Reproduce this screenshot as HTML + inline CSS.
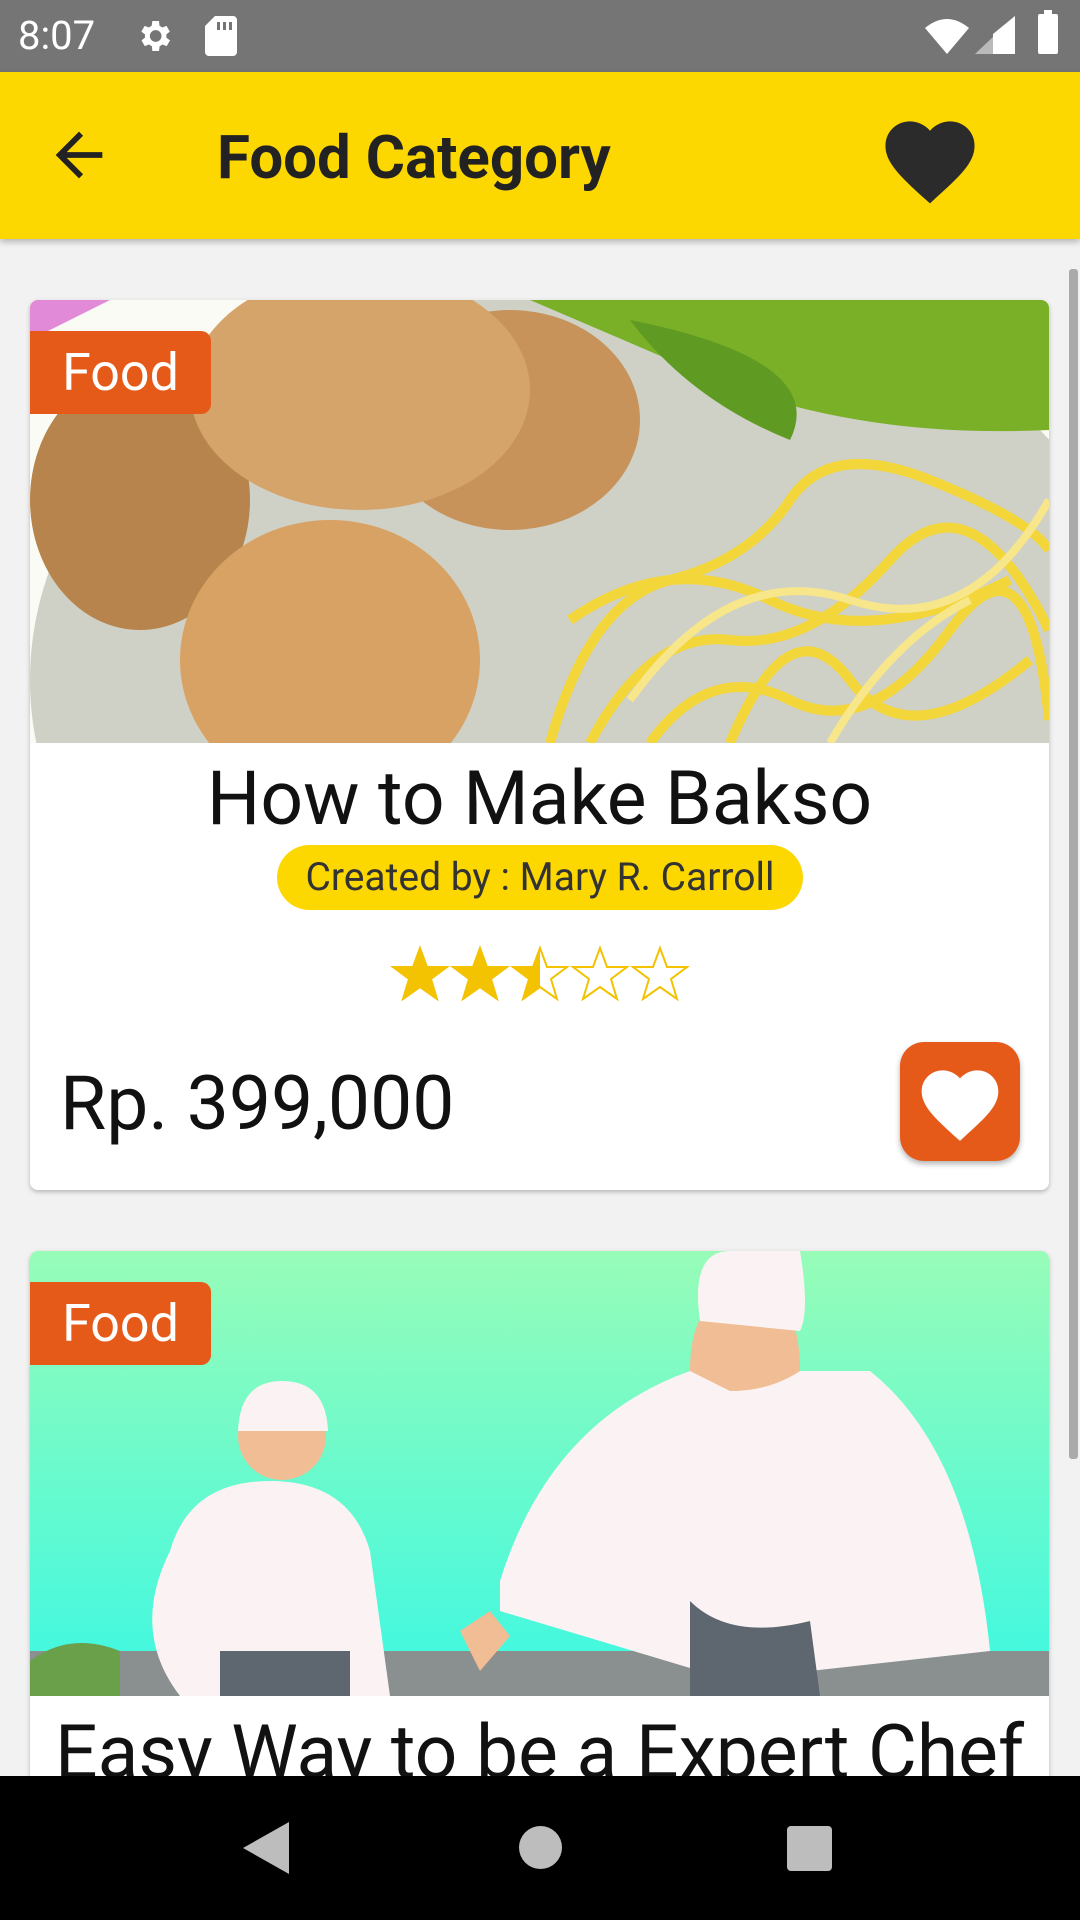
<!DOCTYPE html>
<html><head><meta charset="utf-8"><style>
*{margin:0;padding:0;box-sizing:border-box}
body{width:1080px;height:1920px;overflow:hidden;background:#f2f2f2;font-family:"Roboto","Liberation Sans",sans-serif;position:relative}
.status{position:absolute;top:0;left:0;width:1080px;height:72px;background:#757575;color:#fff}
.appbar{position:absolute;top:72px;left:0;width:1080px;height:167px;background:#fdd700;box-shadow:0 3px 6px rgba(0,0,0,.25)}
.card{position:absolute;left:30px;width:1019px;background:#fff;border-radius:8px;overflow:hidden;box-shadow:0 2px 5px rgba(0,0,0,.25)}
.badge{position:absolute;left:0;top:31px;width:181px;height:83px;background:#e65a19;border-radius:0 10px 10px 0;color:#fff;font-size:52px;line-height:83px;text-align:center}
.nav{position:absolute;left:0;top:1776px;width:1080px;height:144px;background:#000}
</style></head><body>
<div class="status">
<div style="position:absolute;left:18px;top:12px;font-size:40px">8:07</div>
<svg style="position:absolute;left:134px;top:16px" width="40" height="40" viewBox="0 0 24 24"><path fill="#fff" d="M19.4 13a7.5 7.5 0 000-2l2.1-1.6-2-3.5-2.5 1a7 7 0 00-1.7-1L15 3h-4l-.4 2.9a7 7 0 00-1.7 1l-2.5-1-2 3.5L6.6 11a7.5 7.5 0 000 2l-2.1 1.6 2 3.5 2.5-1a7 7 0 001.7 1L11 21h4l.4-2.9a7 7 0 001.7-1l2.5 1 2-3.5zM13 15.5a3.5 3.5 0 110-7 3.5 3.5 0 010 7z"/></svg>
<svg style="position:absolute;left:205px;top:16px" width="32" height="40" viewBox="0 0 16 20"><path fill="#fff" d="M5 0h9a2 2 0 012 2v16a2 2 0 01-2 2H2a2 2 0 01-2-2V5zM6 3v4h1.5V3zM9 3v4h1.5V3zM12 3v4h1.5V3z"/></svg>
<svg style="position:absolute;left:925px;top:16px" width="90" height="40" viewBox="0 0 90 40"><path fill="#fff" d="M22 38L0 12Q22-6 44 12z"/><path fill="#fff" opacity=".5" d="M50 38L90 0v38z"/><path fill="#fff" d="M68 38V18L90 0v38z"/></svg>
<div style="position:absolute;left:1038px;top:14px;width:20px;height:40px;background:#fff;border-radius:2px"></div>
<div style="position:absolute;left:1044px;top:10px;width:8px;height:6px;background:#fff"></div>
</div>
<div class="appbar">
<svg style="position:absolute;left:44px;top:48px" width="70" height="70" viewBox="0 0 24 24"><path fill="#222" d="M20 11H7.8l5.6-5.6L12 4l-8 8 8 8 1.4-1.4L7.8 13H20z"/></svg>
<div style="position:absolute;left:217px;top:50px;font-size:60px;font-weight:bold;color:#222">Food Category</div>
<svg style="position:absolute;left:876px;top:36px" width="108" height="98" viewBox="0 0 24 22"><path fill="#2b2b2b" d="M12 21.4l-1.5-1.3C5.4 15.4 2 12.3 2 8.5 2 5.4 4.4 3 7.5 3c1.7 0 3.4.8 4.5 2.1C13.1 3.8 14.8 3 16.5 3 19.6 3 22 5.4 22 8.5c0 3.8-3.4 6.9-8.5 11.5z"/></svg>
</div>
<div style="position:absolute;left:1069px;top:269px;width:9px;height:1190px;background:#aaa;border-radius:3px"></div>

<div class="card" style="top:300px;height:890px">
<svg width="1019" height="443" viewBox="0 0 1019 443" style="display:block">
<rect width="1019" height="443" fill="#fbfbf6"/>
<ellipse cx="560" cy="380" rx="560" ry="420" fill="#cfd1c6"/>
<path d="M0 0h80L0 40z" fill="#e08ad8"/>
<path d="M500 0h519v130Q800 140 640 60z" fill="#79b027"/>
<path d="M600 20Q800 60 760 140Q660 100 600 20z" fill="#5f9a22"/>
<ellipse cx="110" cy="200" rx="110" ry="130" fill="#b6844c"/>
<ellipse cx="480" cy="120" rx="130" ry="110" fill="#c7935a"/>
<ellipse cx="330" cy="90" rx="170" ry="120" fill="#d4a46a"/>
<ellipse cx="300" cy="360" rx="150" ry="140" fill="#d8a264"/>
<g stroke="#f3d63a" stroke-width="10" fill="none">
<path d="M520 443Q560 300 640 280T760 200T900 180T1019 250"/>
<path d="M560 443Q620 330 700 340T860 260T1019 330"/>
<path d="M620 443Q680 360 760 400T920 330T1019 420"/>
<path d="M540 320Q640 250 740 300T980 280"/>
<path d="M700 443Q760 300 820 380T1000 360"/>
</g>
<g stroke="#f8e68a" stroke-width="8" fill="none">
<path d="M600 400Q700 260 820 300T1019 200"/>
<path d="M800 443Q860 340 940 300"/>
</g>
</svg>
<div class="badge">Food</div>
<div style="position:absolute;left:0;width:1019px;top:455px;text-align:center;font-size:75px;color:#111">How to Make Bakso</div>
<div style="position:absolute;left:247px;top:545px;width:526px;height:65px;background:#fdd700;border-radius:33px;text-align:center;line-height:65px;font-size:39px;color:#333">Created by : Mary R. Carroll</div>
<svg style="position:absolute;left:359px;top:645px" width="302" height="60" viewBox="0 0 300 60">
<defs><linearGradient id="h"><stop offset=".5" stop-color="#f3c200"/><stop offset=".5" stop-color="#fff"/></linearGradient></defs>
<g stroke="#f3c200" stroke-width="2">
<path fill="#f3c200" d="M30 3l7 19h20l-16 12 6 20-17-12-17 12 6-20L3 22h20z"/>
<path fill="#f3c200" transform="translate(60)" d="M30 3l7 19h20l-16 12 6 20-17-12-17 12 6-20L3 22h20z"/>
<path fill="url(#h)" transform="translate(120)" d="M30 3l7 19h20l-16 12 6 20-17-12-17 12 6-20L3 22h20z"/>
<path fill="#fff" transform="translate(180)" d="M30 3l7 19h20l-16 12 6 20-17-12-17 12 6-20L3 22h20z"/>
<path fill="#fff" transform="translate(240)" d="M30 3l7 19h20l-16 12 6 20-17-12-17 12 6-20L3 22h20z"/>
</g></svg>
<div style="position:absolute;left:30px;top:760px;font-size:75px;color:#111">Rp. 399,000</div>
<div style="position:absolute;left:870px;top:742px;width:120px;height:119px;background:#e65a19;border-radius:24px;box-shadow:0 3px 6px rgba(0,0,0,.3)">
<svg style="position:absolute;left:14px;top:16px" width="92" height="86" viewBox="0 0 24 22"><path fill="#fff" d="M12 21.4l-1.5-1.3C5.4 15.4 2 12.3 2 8.5 2 5.4 4.4 3 7.5 3c1.7 0 3.4.8 4.5 2.1C13.1 3.8 14.8 3 16.5 3 19.6 3 22 5.4 22 8.5c0 3.8-3.4 6.9-8.5 11.5z"/></svg>
</div>
</div>

<div class="card" style="top:1251px;height:600px">
<svg width="1019" height="445" viewBox="0 0 1019 445" style="display:block">
<defs><linearGradient id="g" x1="0" y1="0" x2="0" y2="1"><stop offset="0" stop-color="#98fcb8"/><stop offset="1" stop-color="#3cf8e2"/></linearGradient></defs>
<rect width="1019" height="445" fill="url(#g)"/>
<rect x="0" y="400" width="1019" height="45" fill="#8a8f8f"/>
<path d="M0 410Q40 380 90 400V445H0z" fill="#6aa04a"/>
<path d="M150 445Q100 380 140 300Q160 230 240 230Q320 230 340 300L360 445z" fill="#fbf3f3"/>
<circle cx="252" cy="185" r="44" fill="#f0bd94"/>
<path d="M208 180Q210 130 252 130Q296 130 298 180z" fill="#fbf3f3"/>
<path d="M470 330Q520 170 660 120L840 120Q940 200 960 400L780 420H670L470 360z" fill="#fbf3f3"/>
<path d="M660 120Q660 40 720 40Q770 40 770 120Q740 140 700 140z" fill="#f0bd94"/>
<path d="M670 70Q660 0 700 0H770Q780 60 770 80z" fill="#fbf3f3"/>
<path d="M660 350Q700 390 780 370L790 445H660z" fill="#5e6670"/>
<path d="M190 400H320V445H190z" fill="#5e6670"/>
<path d="M430 380L460 360L480 385L450 420z" fill="#f0bd94"/>
</svg>
<div class="badge">Food</div>
<div style="position:absolute;left:0;width:1019px;top:458px;text-align:center;font-size:75px;color:#111;white-space:nowrap">Easy Way to be a Expert Chef</div>
</div>

<div class="nav">
<svg style="position:absolute;left:243px;top:46px" width="48" height="52" viewBox="0 0 48 52"><path fill="#bdbdbd" d="M46 0v52L0 26z"/></svg>
<div style="position:absolute;left:519px;top:50px;width:43px;height:43px;border-radius:50%;background:#bdbdbd"></div>
<div style="position:absolute;left:787px;top:50px;width:45px;height:45px;border-radius:4px;background:#bdbdbd"></div>
</div>
</body></html>
